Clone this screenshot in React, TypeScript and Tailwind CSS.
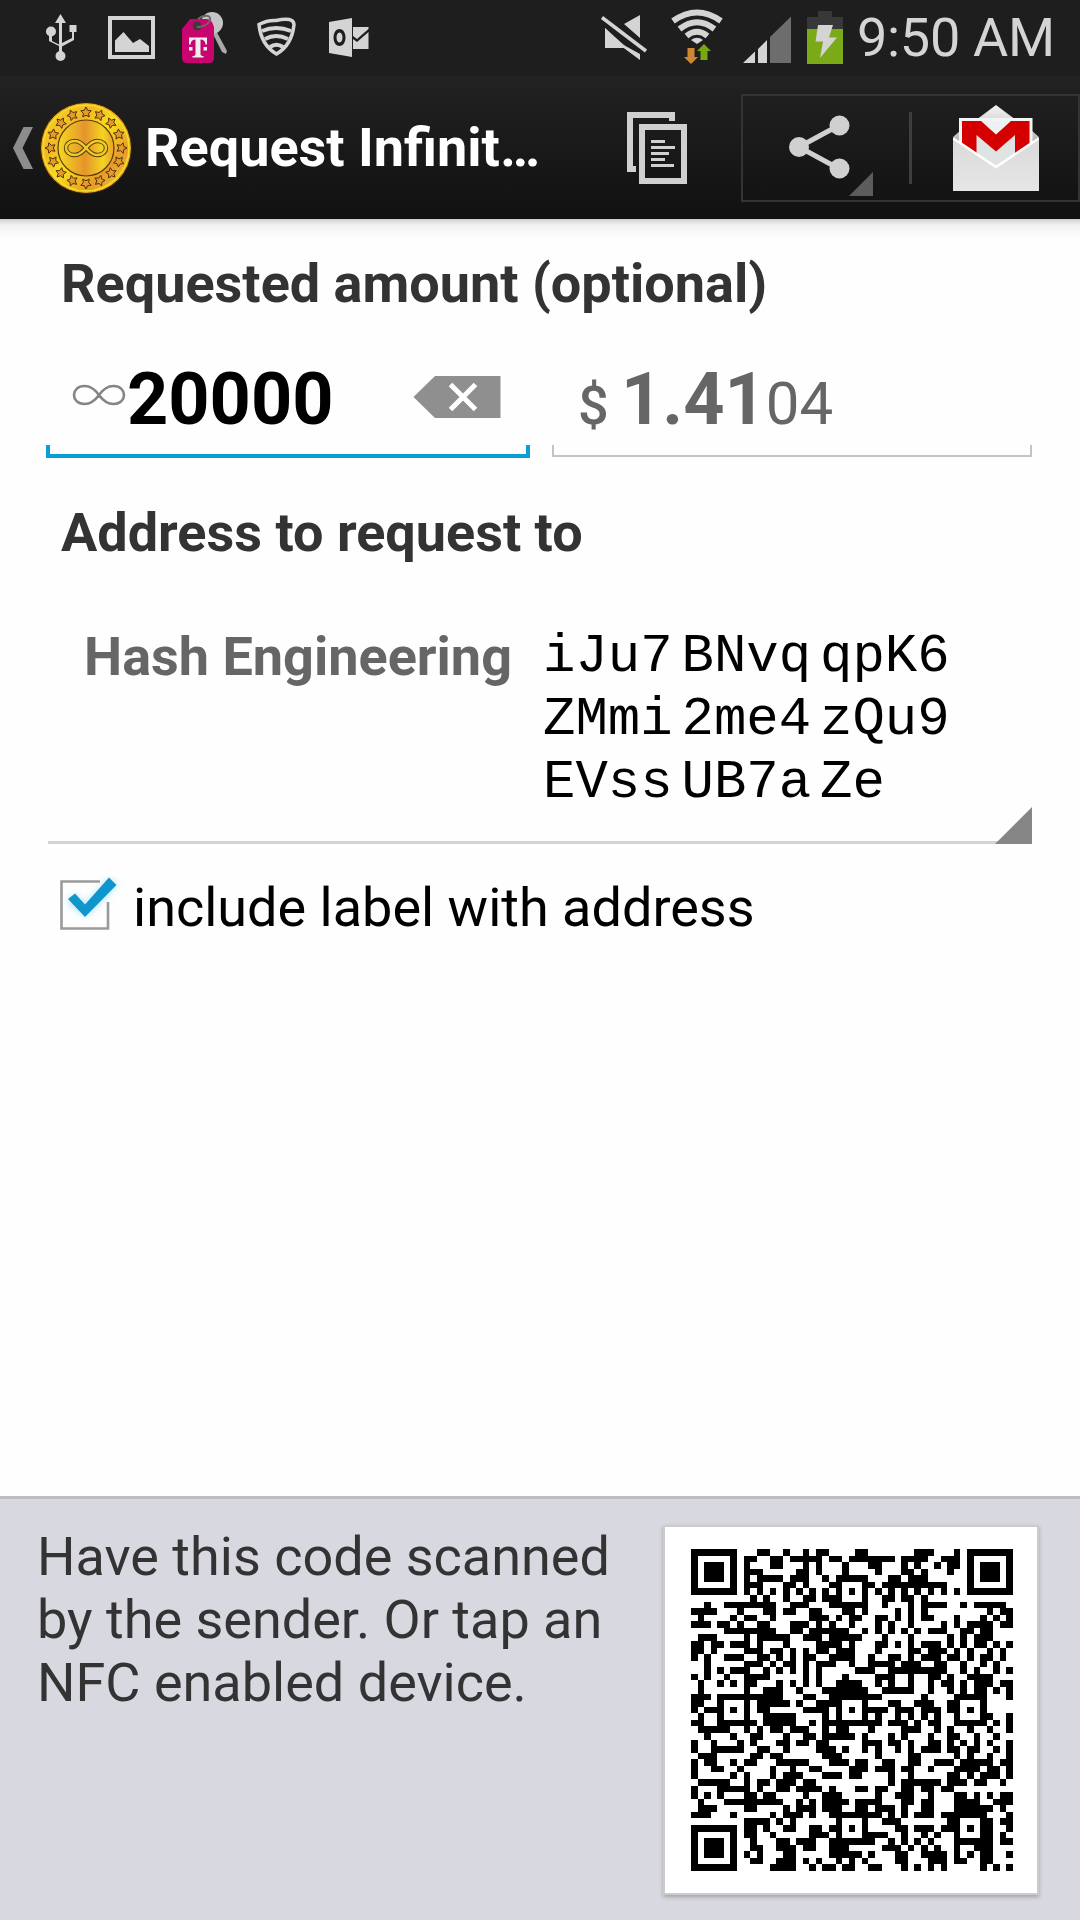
import React from "react";

/* ---------- QR code (version 8, level H, byte mode, mask 1) ---------- */

const SIZE = 49;
const SHORT_BLOCKS = 4;
const SHORT_LEN = 14;
const BLOCKS = 6;
const ECC_LEN = 26;
const DATA_LEN = 86;

function gfMul(x: number, y: number): number {
  let z = 0;
  for (let i = 7; i >= 0; i--) {
    z = (z << 1) ^ ((z >>> 7) * 0x11d);
    z ^= ((y >>> i) & 1) * x;
  }
  return z & 0xff;
}

function rsDivisor(degree: number): number[] {
  const result: number[] = new Array(degree).fill(0);
  result[degree - 1] = 1;
  let root = 1;
  for (let i = 0; i < degree; i++) {
    for (let j = 0; j < degree; j++) {
      result[j] = gfMul(result[j], root);
      if (j + 1 < degree) result[j] ^= result[j + 1];
    }
    root = gfMul(root, 2);
  }
  return result;
}

function rsRemainder(data: number[], divisor: number[]): number[] {
  const result: number[] = divisor.map(() => 0);
  for (const b of data) {
    const factor = b ^ (result.shift() as number);
    result.push(0);
    divisor.forEach((coef, i) => (result[i] ^= gfMul(coef, factor)));
  }
  return result;
}

function encodeQr(text: string): boolean[][] {
  const bits: number[] = [];
  const push = (v: number, n: number) => {
    for (let i = n - 1; i >= 0; i--) bits.push((v >>> i) & 1);
  };
  push(4, 4);
  push(text.length, 8);
  for (const ch of text) push(ch.charCodeAt(0), 8);
  push(0, Math.min(4, DATA_LEN * 8 - bits.length));
  while (bits.length % 8) bits.push(0);
  for (let pad = 0xec; bits.length < DATA_LEN * 8; pad ^= 0xec ^ 0x11) push(pad, 8);
  const data: number[] = [];
  for (let i = 0; i < bits.length; i += 8)
    data.push(parseInt(bits.slice(i, i + 8).join(""), 2));

  const divisor = rsDivisor(ECC_LEN);
  const blocks: number[][] = [];
  const ecc: number[][] = [];
  for (let i = 0, k = 0; i < BLOCKS; i++) {
    const len = SHORT_LEN + (i < SHORT_BLOCKS ? 0 : 1);
    const block = data.slice(k, k + len);
    k += len;
    blocks.push(block);
    ecc.push(rsRemainder(block, divisor));
  }
  const stream: number[] = [];
  for (let i = 0; i <= SHORT_LEN; i++)
    for (const b of blocks) if (i < b.length) stream.push(b[i]);
  for (let i = 0; i < ECC_LEN; i++) for (const e of ecc) stream.push(e[i]);

  const m: boolean[][] = Array.from({ length: SIZE }, () => new Array(SIZE).fill(false));
  const fixed: boolean[][] = Array.from({ length: SIZE }, () => new Array(SIZE).fill(false));
  const set = (r: number, c: number, v: boolean) => {
    if (r < 0 || c < 0 || r >= SIZE || c >= SIZE) return;
    m[r][c] = v;
    fixed[r][c] = true;
  };
  for (let i = 0; i < SIZE; i++) {
    set(6, i, i % 2 === 0);
    set(i, 6, i % 2 === 0);
  }
  for (const [r, c] of [[3, 3], [3, SIZE - 4], [SIZE - 4, 3]])
    for (let dr = -4; dr <= 4; dr++)
      for (let dc = -4; dc <= 4; dc++) {
        const d = Math.max(Math.abs(dr), Math.abs(dc));
        set(r + dr, c + dc, d !== 2 && d !== 4);
      }
  for (const r of [6, 24, 42])
    for (const c of [6, 24, 42]) {
      if ((r === 6 && c !== 24) || (c === 6 && r !== 24)) continue;
      for (let dr = -2; dr <= 2; dr++)
        for (let dc = -2; dc <= 2; dc++)
          set(r + dr, c + dc, Math.max(Math.abs(dr), Math.abs(dc)) !== 1);
    }
  const format = 0b001001110111110;
  const fb = (i: number) => ((format >>> i) & 1) === 1;
  for (let i = 0; i <= 5; i++) set(i, 8, fb(i));
  set(7, 8, fb(6));
  set(8, 8, fb(7));
  set(8, 7, fb(8));
  for (let i = 9; i < 15; i++) set(8, 14 - i, fb(i));
  for (let i = 0; i < 8; i++) set(8, SIZE - 1 - i, fb(i));
  for (let i = 8; i < 15; i++) set(SIZE - 15 + i, 8, fb(i));
  set(SIZE - 8, 8, true);
  let rem = 8;
  for (let i = 0; i < 12; i++) rem = (rem << 1) ^ ((rem >>> 11) * 0x1f25);
  const version = (8 << 12) | rem;
  for (let i = 0; i < 18; i++) {
    const v = ((version >>> i) & 1) === 1;
    const a = SIZE - 11 + (i % 3);
    const b = Math.floor(i / 3);
    set(b, a, v);
    set(a, b, v);
  }
  let n = 0;
  for (let right = SIZE - 1; right >= 1; right -= 2) {
    if (right === 6) right = 5;
    for (let v = 0; v < SIZE; v++)
      for (let j = 0; j < 2; j++) {
        const c = right - j;
        const up = ((right + 1) & 2) === 0;
        const r = up ? SIZE - 1 - v : v;
        if (fixed[r][c]) continue;
        const bit = n < stream.length * 8 ? ((stream[n >>> 3] >>> (7 - (n & 7))) & 1) === 1 : false;
        n++;
        m[r][c] = bit !== (r % 2 === 0);
      }
  }
  return m;
}

const ADDRESS = ["iJu7", "BNvq", "qpK6", "ZMmi", "2me4", "zQu9", "EVss", "UB7a", "Ze"];

function QrCode({ text }: { text: string }) {
  const path = encodeQr(text)
    .map((row, r) => row.map((on, c) => (on ? `M${c} ${r}h1v1h-1z` : "")).join(""))
    .join("");
  return (
    <svg viewBox="0 0 49 49" width="322" height="322" shapeRendering="crispEdges">
      <path d={path} fill="#000" />
    </svg>
  );
}

/* ---------- Status bar ---------- */

function StatusBar() {
  return (
    <div className="relative h-[76px] shrink-0 bg-[#1e1e1e]">
      <svg className="block" width="860" height="76" viewBox="0 0 860 76" fill="#d4d4d4">
        <g>
          <path d="M60.500 14l5.500 9h-4v20l10-5v-6h-2.500v-7h7v7H74v8l-12 6.500V52h-3v-6l-10-5v-6h3v6l7 3.500V23h-4z" />
          <circle cx="51" cy="31.500" r="5" />
          <circle cx="60.500" cy="56" r="5" />
        </g>
        <path fillRule="evenodd" d="M108 16h47v43h-47zM112 20v35h39V20z" />
        <path d="M115 40.500l8.500-8.500 9.500 11 7-4 9 7V52h-34z" />
        <g>
          <path d="M214 27l13 24-1 3-4-2-11-22z" fill="#a9a9a9" />
          <circle cx="212" cy="23" r="11" fill="#c4c4c4" />
          <path d="M190 19h17q3 0 5 3l2 5v31q0 5-5 5h-22q-5 0-5-5V29z" fill="#c8046e" />
          <circle cx="197" cy="26" r="4.500" fill="#46353d" />
          <path d="M197 27q8 0 12-5 3-4-1-6-5-1-10 3" fill="none" stroke="#6a6a6a" strokeWidth="2" />
          <path d="M189 37.500h18v7h-1.500q-.5-5-5-5V54q0 2 3 2v1.500h-11V56q3 0 3-2V39.500q-4.500 0-5 5H189zM189 47h3.500v3.500H189zM203.500 47h3.500v3.500h-3.500z" fill="#eee" />
        </g>
        <g fill="none" stroke="#d4d4d4" strokeWidth="3.500">
          <path d="M276 20.500q17.500-4 18 4Q292 45 276.500 54 261 45 259 24.500q8-4.500 17-4z" />
          <path d="M262 31q14-6 29 0" strokeWidth="4" />
          <path d="M265 39q11-6 23 0" strokeWidth="4" />
          <path d="M270 47q6.500-4.500 13 0" strokeWidth="4" />
        </g>
        <path fillRule="evenodd" d="M329 22l23-4v39l-23-4zM339.500 29c-8 0-8 17 0 17s8-17 0-17zm0 3.500c4 0 4 10 0 10s-4-10 0-10z" />
        <path d="M353 27h15.500v2L357 39l-4-3zM353 39l4 3 11.500-10v17H353z" />
        <path d="M624 24l16-9v23zM605 28l35 31.500L624 48h-19z" />
        <path d="M605 28l20 20h-20zM620 43l20 11v6l-16-12z" />
        <path d="M602 17.500L646 51" stroke="#d4d4d4" strokeWidth="3.500" />
        <g fill="none" stroke="#d4d4d4" strokeWidth="6">
          <path d="M673 21q24-17 48 0" />
          <path d="M679.500 29q17.500-13.500 35 0" />
          <path d="M686.500 36q10.500-8.500 21 0" />
        </g>
        <path d="M691 40q6-4.500 12 0l-6 4z" />
        <path d="M687.500 48h7v9h3.500l-7 7-7-7h3.500z" fill="#d08733" />
        <path d="M700.500 60h7v-9h3.500l-7-7-7 7h3.500z" fill="#76a810" />
        <path d="M743 63l12-11.500V63zM758 63V49l9-9v23z" />
        <path d="M770 63V37l21-20.500V63z" fill="#6d6d6d" />
        <path d="M818 11h14v6h11v12h-36V17h11z" fill="#383838" />
        <path d="M807 29h36v35h-36z" fill="#7aaa18" />
        <path d="M818 25h15l-4 12.500h8L820 58l3-16.500h-7.500z" />
      </svg>
      <span className="absolute left-[857px] top-[6px] whitespace-nowrap text-[54px] leading-[64px] tracking-[-0.3px] text-[#d4d4d4]">
        9:50 AM
      </span>
    </div>
  );
}

/* ---------- Action bar ---------- */

function star(cx: number, cy: number, r: number, turn: number): string {
  return Array.from({ length: 10 }, (_, i) => {
    const a = turn + (i * Math.PI) / 5;
    const q = i % 2 ? r * 0.5 : r;
    return `${(cx + q * Math.sin(a)).toFixed(2)},${(cy - q * Math.cos(a)).toFixed(2)}`;
  }).join(" ");
}

function Coin() {
  return (
    <svg width="94" height="94" viewBox="0 0 94 94">
      <defs>
        <linearGradient id="rim" x1="0" y1="0" x2="1" y2="1">
          <stop offset="0" stopColor="#f5dc1e" />
          <stop offset=".3" stopColor="#f2b725" />
          <stop offset=".5" stopColor="#f7e01d" />
          <stop offset=".75" stopColor="#e89a2a" />
          <stop offset="1" stopColor="#f6dd1d" />
        </linearGradient>
        <linearGradient id="face" x1="0" x2="1">
          <stop offset="0" stopColor="#f5d822" />
          <stop offset=".48" stopColor="#e5942c" />
          <stop offset=".8" stopColor="#f4d322" />
          <stop offset="1" stopColor="#e8a028" />
        </linearGradient>
      </defs>
      <circle cx="47" cy="47" r="45.500" fill="#e9a321" stroke="#2c1a05" />
      <circle cx="47" cy="47" r="43" fill="url(#rim)" stroke="#f4e02a" strokeWidth="1.500" />
      <circle cx="47" cy="47" r="28" fill="url(#face)" stroke="#5d3c0c" strokeWidth="1.200" />
      {Array.from({ length: 16 }, (_, i) => {
        const a = (i * Math.PI) / 8;
        return (
          <polygon
            key={i}
            points={star(47 + 35.500 * Math.sin(a), 47 - 35.500 * Math.cos(a), 5.500, a)}
            fill="#e8992b"
            stroke="#4d330c"
            strokeWidth="1"
          />
        );
      })}
      <path
        d="M47 47c-5-6-8-7-11-7-12 0-12 14 0 14 3 0 6-1 11-7s8-7 11-7c12 0 12 14 0 14-3 0-6-1-11-7z"
        fill="none"
        stroke="#54400f"
        strokeWidth="4.500"
      />
      <path
        d="M47 47c-5-6-8-7-11-7-12 0-12 14 0 14 3 0 6-1 11-7s8-7 11-7c12 0 12 14 0 14-3 0-6-1-11-7z"
        fill="none"
        stroke="#f0c828"
        strokeWidth="2.500"
      />
    </svg>
  );
}

function Gmail() {
  return (
    <svg width="90" height="90" viewBox="0 0 90 90">
      <defs>
        <linearGradient id="env" x1="0" y1="0" x2="0" y2="1">
          <stop offset="0" stopColor="#d9d9d9" />
          <stop offset="1" stopColor="#e6e6e6" />
        </linearGradient>
        <linearGradient id="flap" x1="0" y1="0" x2="0" y2="1">
          <stop offset="0" stopColor="#f4f4f4" />
          <stop offset="1" stopColor="#b5b5b5" />
        </linearGradient>
      </defs>
      <path d="M45 2l18 13.500H27zM2 34l8-7v12zM88 34l-8-7v12z" fill="url(#flap)" />
      <path d="M8 15h73.500v45H8z" fill="#f3f5f4" />
      <path d="M11 18h67.500v34L45 66 11 52z" fill="#dfe3e3" />
      <path d="M28 18h34L45 31.500z" fill="#eef1f1" />
      <path d="M11 18h19l15 13.500L60 18h18.500v35H64V32L45 48.500 25.500 32v21H11z" fill="#d40000" />
      <path d="M2 34l43 30 43-30v54H2z" fill="url(#env)" />
      <path d="M2.500 35.500L45 64l42.500-28.500" fill="none" stroke="#fff" strokeWidth="2.500" />
    </svg>
  );
}

function ActionBar() {
  return (
    <div className="flex h-[143px] shrink-0 items-center bg-gradient-to-b from-[#222] to-[#111]">
      <svg className="ml-[12px] shrink-0" width="22" height="44" viewBox="0 0 22 44">
        <path d="M11.500 1H21L10.500 22 21 43h-9.500L1 22z" fill="#8d8d8d" />
      </svg>
      <div className="ml-[5px] h-[94px] shrink-0">
        <Coin />
      </div>
      <h1 className="ml-[12px] w-[470px] shrink-0 whitespace-nowrap text-[54px] font-bold leading-[64px] text-white">
        Request Infinit…
      </h1>
      <svg className="ml-[12px] shrink-0" width="60" height="74" viewBox="0 0 60 74" fill="#d0d0d0">
        <path d="M0 1h48v9h-6V7H6v48h3v6H0z" />
        <path fillRule="evenodd" d="M12 13h48v60H12zM18 19v48h36V19z" />
        <path d="M24 29h14v3H24zM24 35h24v3H24zM24 41h18v3H24zM24 47h14v3H24zM24 53h23v3H24z" />
      </svg>
      <div className="ml-auto flex h-[108px] w-[339px] shrink-0 items-center border-2 border-[#343434]">
        <svg className="shrink-0" width="166" height="104" viewBox="0 0 166 104" fill="#d0d0d0">
          <path d="M96.500 29L56 51l40.500 22" fill="none" stroke="#d0d0d0" strokeWidth="5" />
          <circle cx="56" cy="51" r="10" />
          <circle cx="96.500" cy="29.500" r="10" />
          <circle cx="96.500" cy="72.500" r="10" />
          <path d="M130 76v24h-24z" fill="#5c5c5c" />
        </svg>
        <div className="h-[72px] w-[3px] shrink-0 bg-[#3e3e3e]" />
        <div className="ml-[39px] shrink-0">
          <Gmail />
        </div>
      </div>
    </div>
  );
}

/* ---------- Form ---------- */

function ClearIcon() {
  return (
    <svg width="88" height="42" viewBox="0 0 88 42">
      <path d="M22 0h65.500v42H22L.5 21z" fill="#8f8f8f" />
      <path d="M37.500 8.500l25 25M62.500 8.500l-25 25" stroke="#fff" strokeWidth="5" />
    </svg>
  );
}

function AmountRow() {
  return (
    <div className="mt-[24px] flex h-[118px] pl-[46px]">
      <div className="flex h-full w-[484px] flex-col">
        <div className="flex h-[105px] items-start pl-[26px] pt-[18px]">
          <svg className="mt-[26px] shrink-0" width="54" height="22" viewBox="0 0 54 22">
            <path
              d="M27 11C22 4 17 2 12.500 2-1.500 2-1.500 20 12.500 20 17 20 22 18 27 11S37 2 41.500 2c14 0 14 18 0 18C37 20 32 18 27 11z"
              fill="none"
              stroke="#858585"
              strokeWidth="2.600"
            />
          </svg>
          <span className="ml-[1px] w-[286px] text-[72px] font-bold leading-[84px] text-black">20000</span>
          <div className="mt-[18px]">
            <ClearIcon />
          </div>
        </div>
        <div className="h-[13px] border-x-4 border-b-4 border-[#0a9fd4]" />
      </div>
      <div className="ml-[22px] flex h-full w-[480px] flex-col">
        <div className="flex h-[105px] items-baseline pl-[26px] pt-[18px] text-[#666]">
          <span className="w-[43px] text-[54px] font-medium leading-[84px]">$</span>
          <span className="text-[72px] font-bold leading-[84px]">1.41</span>
          <span className="text-[60px] leading-[84px]">04</span>
        </div>
        <div className="h-[12px] border-x-2 border-b-2 border-[#c4c4c4]" />
      </div>
    </div>
  );
}

function AddressRow() {
  return (
    <div className="relative ml-[48px] mt-[60px] flex h-[219px] w-[984px] border-b-[3px] border-[#d3d3d3]">
      <span className="w-[495px] whitespace-nowrap pl-[36px] text-[54px] font-bold leading-[64px] text-[#666]">
        Hash Engineering
      </span>
      <div className="grid h-[189px] grid-cols-[138.500px_138.500px_138.500px] font-['Liberation_Mono',monospace] text-[54px] leading-[63px] text-black">
        {ADDRESS.map((g) => (
          <span key={g}>{g}</span>
        ))}
      </div>
      <svg className="absolute -bottom-[3px] right-0" width="37" height="37" viewBox="0 0 37 37">
        <path d="M37 0v37H0z" fill="#868686" />
      </svg>
    </div>
  );
}

function CheckRow() {
  return (
    <label className="mt-[32px] flex h-[64px] items-start pl-[52px]">
      <svg className="shrink-0" width="80" height="64" viewBox="0 0 80 64">
        <defs>
          <filter id="glow" x="-50%" y="-50%" width="200%" height="200%">
            <feGaussianBlur stdDeviation="4" />
          </filter>
        </defs>
        <path d="M48 5.500H9.500V52.500h46.500V26" fill="none" stroke="#9a9a9a" strokeWidth="2.600" />
        <path d="M16 25l6-5 12 10L58 3l6 5-30 31z" fill="#8fd8f5" filter="url(#glow)" />
        <path d="M16 23l7-5.500 10 11L57 1.500 64.500 9 33 41z" fill="#0f97cd" />
      </svg>
      <span className="ml-[1px] whitespace-nowrap text-[54px] leading-[64px] text-black">
        include label with address
      </span>
    </label>
  );
}

export default function App() {
  return (
    <div className="flex h-[1920px] w-[1080px] flex-col overflow-hidden bg-[#fefefe] font-[Roboto,sans-serif]">
      <StatusBar />
      <ActionBar />
      <main className="flex flex-1 flex-col">
        <div className="h-[20px] bg-gradient-to-b from-[#cfcfcf] via-[#f2f2f2] via-30% to-[#fefefe]" />
        <h2 className="mt-[13px] whitespace-nowrap pl-[61px] text-[54px] font-bold leading-[64px] text-[#333]">
          Requested amount (optional)
        </h2>
        <AmountRow />
        <h2 className="mt-[43px] whitespace-nowrap pl-[61px] text-[54px] font-bold leading-[64px] text-[#333]">
          Address to request to
        </h2>
        <AddressRow />
        <CheckRow />
      </main>
      <footer className="flex h-[424px] shrink-0 border-t-[3px] border-[#bdbdc0] bg-[#d8d8e0]">
        <p className="ml-[37px] mt-[26px] w-[626px] whitespace-nowrap text-[54px] leading-[63px] text-[#333]">
          Have this code scanned
          <br />
          by the sender. Or tap an
          <br />
          NFC enabled device.
        </p>
        <div className="mt-[26px] h-[370px] w-[376px] border-2 border-[#cbcbd0] bg-white pl-[26px] pt-[22px] shadow-[0_2px_4px_rgba(0,0,0,0.25)]">
          <QrCode text={`ifc:${ADDRESS.join("")}?amount=20000&label=Hash%20Engineering`} />
        </div>
      </footer>
    </div>
  );
}
